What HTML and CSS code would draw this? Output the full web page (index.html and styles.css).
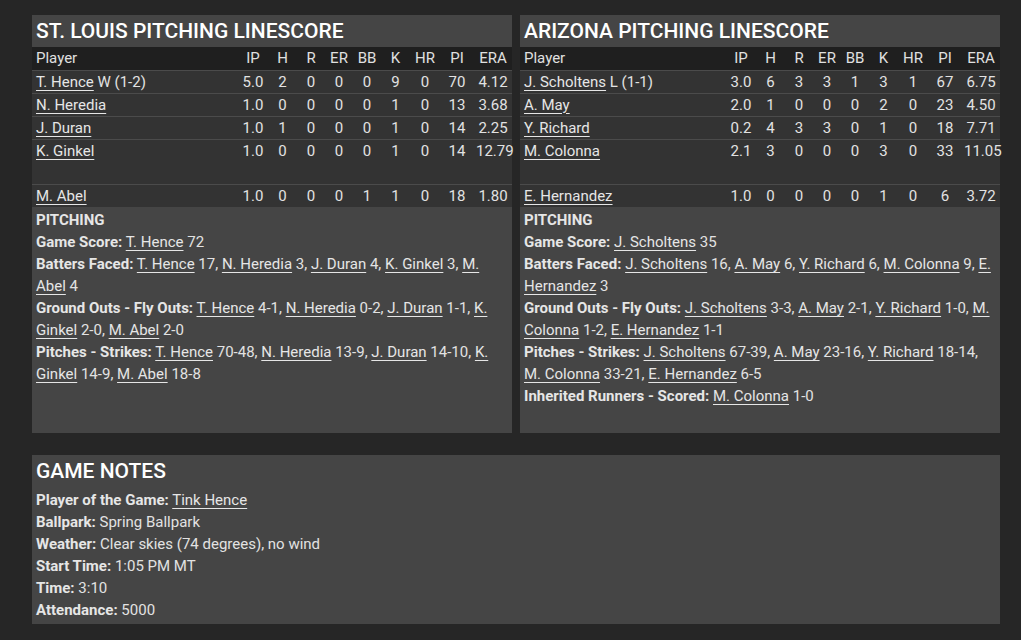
FILE: index.html
```html
<!DOCTYPE html>
<html lang="en">
<head>
<meta charset="utf-8">
<title>Pitching Linescore</title>
<link rel="stylesheet" href="styles.css">
</head>
<body>
<div class="page">
  <div class="top">
    <section class="panel">
      <h2 class="panel-title">ST. LOUIS PITCHING LINESCORE</h2>
      <table class="linescore">
        <colgroup>
          <col class="c-player"><col class="c-ip"><col class="c-h"><col class="c-r"><col class="c-er"><col class="c-bb"><col class="c-k"><col class="c-hr"><col class="c-pi"><col class="c-era">
        </colgroup>
        <thead>
          <tr><th class="player">Player</th><th>IP</th><th>H</th><th>R</th><th>ER</th><th>BB</th><th>K</th><th>HR</th><th>PI</th><th>ERA</th></tr>
        </thead>
        <tbody>
          <tr><td class="player"><a href="#">T. Hence</a> W (1-2)</td><td>5.0</td><td>2</td><td>0</td><td>0</td><td>0</td><td>9</td><td>0</td><td>70</td><td>4.12</td></tr>
          <tr><td class="player"><a href="#">N. Heredia</a></td><td>1.0</td><td>0</td><td>0</td><td>0</td><td>0</td><td>1</td><td>0</td><td>13</td><td>3.68</td></tr>
          <tr><td class="player"><a href="#">J. Duran</a></td><td>1.0</td><td>1</td><td>0</td><td>0</td><td>0</td><td>1</td><td>0</td><td>14</td><td>2.25</td></tr>
          <tr class="tall"><td class="player"><a href="#">K. Ginkel</a></td><td>1.0</td><td>0</td><td>0</td><td>0</td><td>0</td><td>1</td><td>0</td><td>14</td><td class="wide">12.79</td></tr>
          <tr><td class="player"><a href="#">M. Abel</a></td><td>1.0</td><td>0</td><td>0</td><td>0</td><td>1</td><td>1</td><td>0</td><td>18</td><td>1.80</td></tr>
        </tbody>
      </table>
      <div class="notes">
        <p class="notes-head">PITCHING</p>
        <p><b>Game Score:</b> <a href="#">T. Hence</a> 72</p>
        <p><b>Batters Faced:</b> <a href="#">T. Hence</a> 17, <a href="#">N. Heredia</a> 3, <a href="#">J. Duran</a> 4, <a href="#">K. Ginkel</a> 3, <a href="#">M. Abel</a> 4</p>
        <p><b>Ground Outs - Fly Outs:</b> <a href="#">T. Hence</a> 4-1, <a href="#">N. Heredia</a> 0-2, <a href="#">J. Duran</a> 1-1, <a href="#">K. Ginkel</a> 2-0, <a href="#">M. Abel</a> 2-0</p>
        <p><b>Pitches - Strikes:</b> <a href="#">T. Hence</a> 70-48, <a href="#">N. Heredia</a> 13-9, <a href="#">J. Duran</a> 14-10, <a href="#">K. Ginkel</a> 14-9, <a href="#">M. Abel</a> 18-8</p>
      </div>
    </section>

    <section class="panel">
      <h2 class="panel-title">ARIZONA PITCHING LINESCORE</h2>
      <table class="linescore">
        <colgroup>
          <col class="c-player"><col class="c-ip"><col class="c-h"><col class="c-r"><col class="c-er"><col class="c-bb"><col class="c-k"><col class="c-hr"><col class="c-pi"><col class="c-era">
        </colgroup>
        <thead>
          <tr><th class="player">Player</th><th>IP</th><th>H</th><th>R</th><th>ER</th><th>BB</th><th>K</th><th>HR</th><th>PI</th><th>ERA</th></tr>
        </thead>
        <tbody>
          <tr><td class="player"><a href="#">J. Scholtens</a> L (1-1)</td><td>3.0</td><td>6</td><td>3</td><td>3</td><td>1</td><td>3</td><td>1</td><td>67</td><td>6.75</td></tr>
          <tr><td class="player"><a href="#">A. May</a></td><td>2.0</td><td>1</td><td>0</td><td>0</td><td>0</td><td>2</td><td>0</td><td>23</td><td>4.50</td></tr>
          <tr><td class="player"><a href="#">Y. Richard</a></td><td>0.2</td><td>4</td><td>3</td><td>3</td><td>0</td><td>1</td><td>0</td><td>18</td><td>7.71</td></tr>
          <tr class="tall"><td class="player"><a href="#">M. Colonna</a></td><td>2.1</td><td>3</td><td>0</td><td>0</td><td>0</td><td>3</td><td>0</td><td>33</td><td class="wide">11.05</td></tr>
          <tr><td class="player"><a href="#">E. Hernandez</a></td><td>1.0</td><td>0</td><td>0</td><td>0</td><td>0</td><td>1</td><td>0</td><td>6</td><td>3.72</td></tr>
        </tbody>
      </table>
      <div class="notes">
        <p class="notes-head">PITCHING</p>
        <p><b>Game Score:</b> <a href="#">J. Scholtens</a> 35</p>
        <p><b>Batters Faced:</b> <a href="#">J. Scholtens</a> 16, <a href="#">A. May</a> 6, <a href="#">Y. Richard</a> 6, <a href="#">M. Colonna</a> 9, <a href="#">E. Hernandez</a> 3</p>
        <p><b>Ground Outs - Fly Outs:</b> <a href="#">J. Scholtens</a> 3-3, <a href="#">A. May</a> 2-1, <a href="#">Y. Richard</a> 1-0, <a href="#">M. Colonna</a> 1-2, <a href="#">E. Hernandez</a> 1-1</p>
        <p><b>Pitches - Strikes:</b> <a href="#">J. Scholtens</a> 67-39, <a href="#">A. May</a> 23-16, <a href="#">Y. Richard</a> 18-14, <a href="#">M. Colonna</a> 33-21, <a href="#">E. Hernandez</a> 6-5</p>
        <p><b>Inherited Runners - Scored:</b> <a href="#">M. Colonna</a> 1-0</p>
      </div>
    </section>
  </div>

  <section class="panel game-notes">
    <h2 class="panel-title">GAME NOTES</h2>
    <div class="notes">
      <p><b>Player of the Game:</b> <a href="#">Tink Hence</a></p>
      <p><b>Ballpark:</b> Spring Ballpark</p>
      <p><b>Weather:</b> Clear skies (74 degrees), no wind</p>
      <p><b>Start Time:</b> 1:05 PM MT</p>
      <p><b>Time:</b> 3:10</p>
      <p><b>Attendance:</b> 5000</p>
    </div>
  </section>
</div>
</body>
</html>
```

FILE: styles.css
```css
* { box-sizing: border-box; }

html, body {
  margin: 0;
  padding: 0;
  background: #262626;
}

body {
  font-family: Roboto, "Liberation Sans", Arial, sans-serif;
  font-size: 15px;
  color: #e2e2e2;
}

.page {
  width: 968px;
  margin-left: 32px;
  padding-top: 15px;
}

.top {
  display: grid;
  grid-template-columns: 480px 480px;
  column-gap: 8px;
  margin-bottom: 22px;
}

.panel {
  background: #454545;
  display: flex;
  flex-direction: column;
}

.panel-title {
  margin: 0;
  padding: 0 4px;
  height: 32px;
  line-height: 32px;
  font-size: 21px;
  font-weight: 500;
  color: #ffffff;
}

.linescore {
  width: 480px;
  table-layout: fixed;
  border-collapse: collapse;
  background: #333333;
}

.c-player { width: 206px; }
.c-ip { width: 30px; }
.c-h { width: 29px; }
.c-r { width: 28px; }
.c-er { width: 28px; }
.c-bb { width: 28px; }
.c-k { width: 29px; }
.c-hr { width: 30px; }
.c-pi { width: 34px; }
.c-era { width: 38px; }

.linescore th,
.linescore td {
  padding: 0;
  height: 23px;
  line-height: 22px;
  text-align: center;
  font-weight: 400;
  white-space: nowrap;
  vertical-align: top;
}

.linescore thead th {
  background: #1f1f1f;
  color: #e0e0e0;
}

.linescore tbody td {
  border-top: 1px solid #4b4b4b;
}

.linescore .player {
  text-align: left;
  padding-left: 4px;
}

.linescore .wide {
  overflow: visible;
  text-align: left;
  padding-left: 2px;
}

.linescore tr.tall td {
  height: 45px;
}

a {
  color: #e6e6e6;
  text-decoration: underline;
  text-underline-offset: 3px;
}

.notes {
  padding: 2px 4px 26px;
}

.notes p {
  margin: 0;
  line-height: 22px;
}

.notes b,
.notes .notes-head {
  font-weight: 700;
  color: #e6e6e6;
}

.game-notes .notes {
  padding: 2px 4px 3px;
}
```
